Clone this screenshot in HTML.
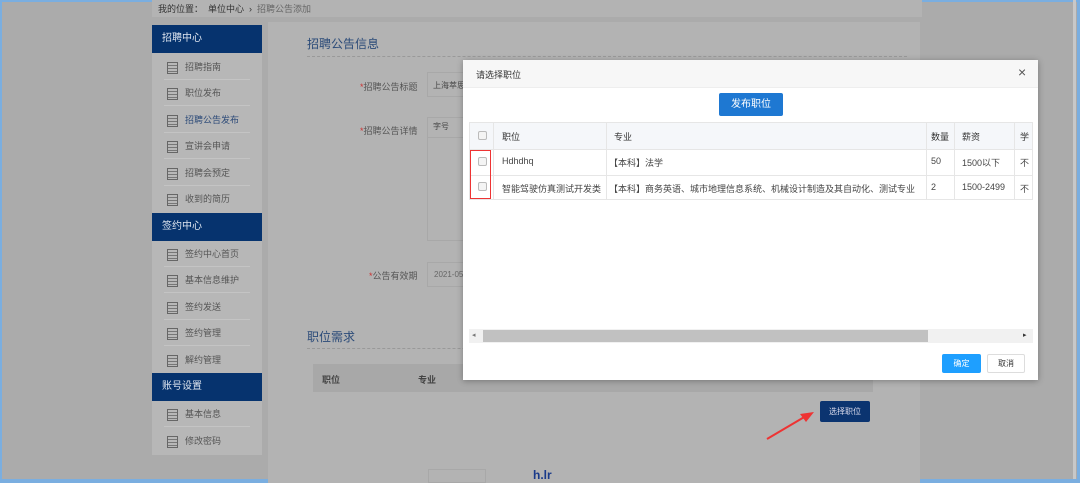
<!DOCTYPE html>
<html><head><meta charset="utf-8"><style>
*{margin:0;padding:0;box-sizing:border-box}
body{width:1080px;height:483px;overflow:hidden;background:#ababab;font-family:"Liberation Sans","Noto Sans CJK SC",sans-serif;position:relative}
.a{position:absolute}
.t{font-size:9px;color:#444}
.side .h{position:absolute;left:152px;width:110px;height:28px;background:#06336e;color:#dfe6f0;font-size:10px;line-height:28px;padding-left:10px}
.side .i{position:absolute;left:164px;width:86px;height:26px;border-bottom:1px solid #c4c4c4;font-size:9px;color:#555;line-height:26px;padding-left:21px}
.side .i:before{content:"";position:absolute;left:3px;top:8px;width:9px;height:10px;border:1px solid #666;background:repeating-linear-gradient(#b8b8b8 0 2px,#777 2px 3px)}
.cb{position:absolute;width:9px;height:9px;border:1px solid #bbb;border-radius:2px;background:#f4f4f4}
</style></head><body>
<div class="a" style="left:0;top:0;width:1080px;height:2px;background:#7aaee0"></div>
<div class="a" style="left:0;top:0;width:2px;height:483px;background:#7aaee0"></div>
<div class="a" style="left:1077px;top:0;width:3px;height:483px;background:#7aaee0"></div>
<div class="a" style="left:0;top:479px;width:1080px;height:4px;background:#7aaee0"></div>
<div class="a" style="left:1073px;top:0;width:3px;height:479px;background:#c8c8c8"></div>
<div class="a" style="left:152px;top:0;width:770px;height:17px;background:#b3b3b3"></div>
<div class="a t" style="left:158px;top:2px;color:#333">我的位置：&nbsp; 单位中心 &nbsp;›&nbsp; <span style="color:#666">招聘公告添加</span></div>
<div class="a" style="left:152px;top:25px;width:110px;height:430px;background:#b7b7b7"></div>
<div class="a" style="left:268px;top:22px;width:652px;height:461px;background:#b3b3b3"></div>
<div class="side">
<div class="h" style="top:25px">招聘中心</div>
<div class="i" style="top:54px">招聘指南</div><div class="i" style="top:80px">职位发布</div><div class="i" style="top:107px;color:#2c4a78">招聘公告发布</div><div class="i" style="top:133px">宣讲会申请</div><div class="i" style="top:160px">招聘会预定</div><div class="i" style="top:186px;border:none">收到的简历</div>
<div class="h" style="top:213px">签约中心</div>
<div class="i" style="top:241px">签约中心首页</div><div class="i" style="top:267px">基本信息维护</div><div class="i" style="top:294px">签约发送</div><div class="i" style="top:320px">签约管理</div><div class="i" style="top:347px;border:none">解约管理</div>
<div class="h" style="top:373px">账号设置</div>
<div class="i" style="top:401px">基本信息</div><div class="i" style="top:428px;border:none">修改密码</div>
</div>
<div class="a" style="left:307px;top:35px;font-size:12px;color:#2a4a78">招聘公告信息</div>
<div class="a" style="left:307px;top:56px;width:600px;border-top:1px dashed #999"></div>
<div class="a t" style="left:360px;top:80px;color:#555"><span style="color:#c33">*</span>招聘公告标题</div>
<div class="a" style="left:427px;top:72px;width:40px;height:25px;border:1px solid #a8a8a8"></div>
<div class="a t" style="left:433px;top:80px;font-size:8px">上海萃思</div>
<div class="a t" style="left:360px;top:124px;color:#555"><span style="color:#c33">*</span>招聘公告详情</div>
<div class="a" style="left:427px;top:117px;width:40px;height:124px;border:1px solid #a8a8a8"></div>
<div class="a" style="left:427px;top:117px;width:40px;height:21px;border-bottom:1px solid #a8a8a8"></div>
<div class="a t" style="left:433px;top:121px;font-size:8px">字号</div>
<div class="a t" style="left:369px;top:269px;color:#555"><span style="color:#c33">*</span>公告有效期</div>
<div class="a" style="left:427px;top:262px;width:40px;height:25px;border:1px solid #a8a8a8"></div>
<div class="a t" style="left:434px;top:270px;font-size:8px;color:#666">2021-05</div>
<div class="a" style="left:307px;top:328px;font-size:12px;color:#2a4a78">职位需求</div>
<div class="a" style="left:307px;top:348px;width:600px;border-top:1px dashed #999"></div>
<div class="a" style="left:313px;top:364px;width:560px;height:28px;background:#a8a8a8"></div>
<div class="a t" style="left:322px;top:373px;font-weight:bold;color:#444">职位</div>
<div class="a t" style="left:418px;top:373px;font-weight:bold;color:#444">专业</div>
<div class="a" style="left:820px;top:401px;width:50px;height:21px;background:#0b3470;border-radius:2px;color:#dde;font-size:8px;line-height:21px;text-align:center">选择职位</div>
<svg class="a" style="left:760px;top:408px" width="60" height="36"><line x1="7" y1="31" x2="46" y2="8" stroke="#e33" stroke-width="2"/><polygon points="54,4 40,6 46,14" fill="#e33"/></svg>
<div class="a" style="left:428px;top:469px;width:58px;height:14px;border:1px solid #a8a8a8"></div>
<div class="a" style="left:533px;top:468px;font-size:12px;font-weight:bold;color:#1a3a8a">h.lr</div>
<!-- modal -->
<div class="a" style="left:463px;top:60px;width:575px;height:320px;background:#fff;box-shadow:0 1px 6px rgba(0,0,0,.3)"></div>
<div class="a" style="left:463px;top:60px;width:575px;height:28px;background:#f7f7f7;border-bottom:1px solid #eee"></div>
<div class="a t" style="left:476px;top:68px;color:#333">请选择职位</div>
<div class="a" style="left:1018px;top:64px;font-size:14px;color:#555">×</div>
<div class="a" style="left:719px;top:93px;width:64px;height:23px;background:#1e78d2;border-radius:2px;color:#fff;font-size:10px;line-height:23px;text-align:center">发布职位</div>
<div class="a" style="left:469px;top:122px;width:564px;height:78px;border:1px solid #e6e6e6;overflow:hidden">
<div class="a" style="left:0;top:0;width:564px;height:27px;background:#f5f7fa;border-bottom:1px solid #e6e6e6"></div>
<div class="a" style="left:0;top:52px;width:564px;border-top:1px solid #e6e6e6"></div>
<div class="a" style="left:23px;top:0;height:78px;border-left:1px solid #e6e6e6"></div>
<div class="a" style="left:136px;top:0;height:78px;border-left:1px solid #e6e6e6"></div>
<div class="a" style="left:456px;top:0;height:78px;border-left:1px solid #e6e6e6"></div>
<div class="a" style="left:484px;top:0;height:78px;border-left:1px solid #e6e6e6"></div>
<div class="a" style="left:544px;top:0;height:78px;border-left:1px solid #e6e6e6"></div>
</div>
<div class="cb" style="left:478px;top:131px"></div><div class="cb" style="left:478px;top:157px"></div><div class="cb" style="left:478px;top:182px"></div>
<div class="a t" style="left:502px;top:130px;color:#333">职位</div>
<div class="a t" style="left:614px;top:130px;color:#333">专业</div>
<div class="a t" style="left:931px;top:130px;color:#333">数量</div>
<div class="a t" style="left:962px;top:130px;color:#333">薪资</div>
<div class="a t" style="left:1020px;top:130px;color:#333">学</div>
<div class="a t" style="left:502px;top:156px">Hdhdhq</div>
<div class="a t" style="left:609px;top:156px">【本科】法学</div>
<div class="a t" style="left:931px;top:156px">50</div>
<div class="a t" style="left:962px;top:156px">1500以下</div>
<div class="a t" style="left:1020px;top:156px">不</div>
<div class="a t" style="left:502px;top:182px">智能驾驶仿真测试开发类</div>
<div class="a t" style="left:609px;top:182px">【本科】商务英语、城市地理信息系统、机械设计制造及其自动化、测试专业</div>
<div class="a t" style="left:931px;top:182px">2</div>
<div class="a t" style="left:962px;top:182px">1500-2499</div>
<div class="a t" style="left:1020px;top:182px">不</div>
<div class="a" style="left:470px;top:150px;width:21px;height:49px;border:1px solid #e33"></div>
<div class="a" style="left:469px;top:329px;width:564px;height:14px;background:#f1f1f1"></div>
<div class="a" style="left:483px;top:330px;width:445px;height:12px;background:#c1c1c1"></div>
<div class="a" style="left:472px;top:331px;font-size:7px;color:#777">◂</div>
<div class="a" style="left:1023px;top:331px;font-size:7px;color:#333">▸</div>
<div class="a" style="left:942px;top:354px;width:39px;height:19px;background:#1e9fff;border-radius:2px;color:#fff;font-size:8px;line-height:19px;text-align:center">确定</div>
<div class="a" style="left:987px;top:354px;width:38px;height:19px;border:1px solid #ddd;border-radius:2px;color:#333;font-size:8px;line-height:17px;text-align:center">取消</div>
</body></html>
